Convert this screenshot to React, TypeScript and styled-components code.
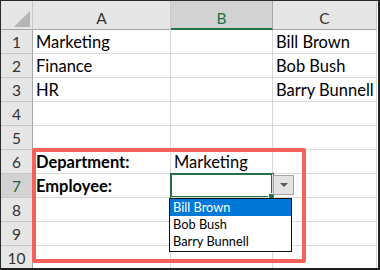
import React, { FC } from "react";
import styled, { createGlobalStyle } from "styled-components";

const GlobalStyle = createGlobalStyle`
  body {
    margin: 0;
    background: #fff;
    font-family: Lato, "Open Sans", sans-serif;
  }
`;

const Frame = styled.div`
  position: relative;
  width: 380px;
  height: 270px;
  box-sizing: border-box;
  border-top: 1px solid #2b2b2b;
  border-left: 1px solid #2b2b2b;
  border-right: 2px solid #1f1f1f;
  border-bottom: 2px solid #1f1f1f;
  overflow: hidden;
  background: #fff;
`;

const Sheet = styled.div`
  display: grid;
  grid-template-columns: 32px 138px 102px 104px;
  grid-template-rows: 29px;
  grid-auto-rows: 24px;
`;

const Corner = styled.div`
  background: #e6e6e6;
  border-right: 1px solid #c8c8c8;
  border-bottom: 1px solid #a6a6a6;
  display: flex;
  align-items: flex-end;
  justify-content: flex-end;
  padding: 0 2px 2px 0;
`;

const ColHeader = styled.div<{ $selected?: boolean }>`
  background: ${(p) => (p.$selected ? "#d2d2d2" : "#e6e6e6")};
  color: ${(p) => (p.$selected ? "#217346" : "#333")};
  border-right: 1px solid ${(p) => (p.$selected ? "#a9a9a9" : "#c8c8c8")};
  border-bottom: ${(p) => (p.$selected ? "2px solid #217346" : "1px solid #a6a6a6")};
  font-size: 15.5px;
  line-height: 22px;
  padding-top: 6px;
  text-align: center;
`;

const RowHeader = styled.div<{ $selected?: boolean }>`
  background: ${(p) => (p.$selected ? "#d2d2d2" : "#e6e6e6")};
  color: ${(p) => (p.$selected ? "#1e5e3a" : "#333")};
  border-right: 1px solid #a6a6a6;
  border-bottom: 1px solid #c8c8c8;
  font-size: 15.5px;
  line-height: 24px;
  text-align: center;
`;

const Cell = styled.div<{ $bold?: boolean; $active?: boolean }>`
  position: relative;
  z-index: ${(p) => (p.$active ? 3 : "auto")};
  border-right: 1px solid #d9d9d9;
  border-bottom: 1px solid #d9d9d9;
  padding-left: 3px;
  font-size: 16.5px;
  font-weight: ${(p) => (p.$bold ? 700 : 400)};
  line-height: 24px;
  color: #000;
  white-space: nowrap;
  box-shadow: ${(p) => (p.$active ? "0 0 0 1px #217346, inset 0 0 0 1px #217346" : "none")};
`;

const FillHandle = styled.div`
  position: absolute;
  right: -3px;
  bottom: -3px;
  width: 5px;
  height: 5px;
  background: #217346;
  border: 1px solid #fff;
`;

const DropButton = styled.div`
  position: absolute;
  left: calc(100% + 1px);
  top: 1px;
  width: 19px;
  height: 18px;
  background: #e3e3e6;
  border: 1px solid #a3a3a3;
  display: flex;
  align-items: center;
  justify-content: center;
`;

const List = styled.div`
  position: absolute;
  left: -2px;
  top: calc(100% + 1px);
  width: 121px;
  background: #fff;
  border: 1px solid #111;
  font-size: 12.8px;
  line-height: 17px;
  font-weight: 400;
  padding-bottom: 1px;
`;

const ListItem = styled.div<{ $highlighted?: boolean }>`
  height: 17px;
  padding-left: 3px;
  background: ${(p) => (p.$highlighted ? "#0078d7" : "transparent")};
  color: ${(p) => (p.$highlighted ? "#fff" : "#000")};
`;

const Highlight = styled.div`
  position: absolute;
  left: 31px;
  top: 147px;
  width: 274px;
  height: 115px;
  box-sizing: border-box;
  border: 4px solid #f6615b;
  border-radius: 2px;
  pointer-events: none;
  z-index: 5;
`;

interface Row {
  a?: string;
  b?: string;
  c?: string;
  bold?: boolean;
}

const rows: Row[] = [
  { a: "Marketing", c: "Bill Brown" },
  { a: "Finance", c: "Bob Bush" },
  { a: "HR", c: "Barry Bunnell" },
  {},
  {},
  { a: "Department:", b: "Marketing", bold: true },
  { a: "Employee:", bold: true },
  {},
  {},
  {},
];

const employees = ["Bill Brown", "Bob Bush", "Barry Bunnell"];

const App: FC = () => {
  return (
    <>
      <GlobalStyle />
      <Frame>
        <Sheet>
          <Corner>
            <svg width="16" height="16" viewBox="0 0 16 16">
              <polygon points="16,0 16,16 0,16" fill="#b4b4b4" />
            </svg>
          </Corner>
          <ColHeader>A</ColHeader>
          <ColHeader $selected>B</ColHeader>
          <ColHeader>C</ColHeader>

          {rows.map((row, i) => {
            const active = i === 6;
            return (
              <React.Fragment key={i}>
                <RowHeader $selected={active}>{i + 1}</RowHeader>
                <Cell $bold={row.bold}>{row.a}</Cell>
                <Cell $active={active}>
                  {row.b}
                  {active && (
                    <>
                      <FillHandle />
                      <DropButton>
                        <svg width="8" height="4" viewBox="0 0 8 4">
                          <polygon points="0,0 8,0 4,4" fill="#5a5a5a" />
                        </svg>
                      </DropButton>
                      <List>
                        {employees.map((name, j) => (
                          <ListItem key={name} $highlighted={j === 0}>
                            {name}
                          </ListItem>
                        ))}
                      </List>
                    </>
                  )}
                </Cell>
                <Cell>{row.c}</Cell>
              </React.Fragment>
            );
          })}
        </Sheet>
        <Highlight />
      </Frame>
    </>
  );
};

export default App;
